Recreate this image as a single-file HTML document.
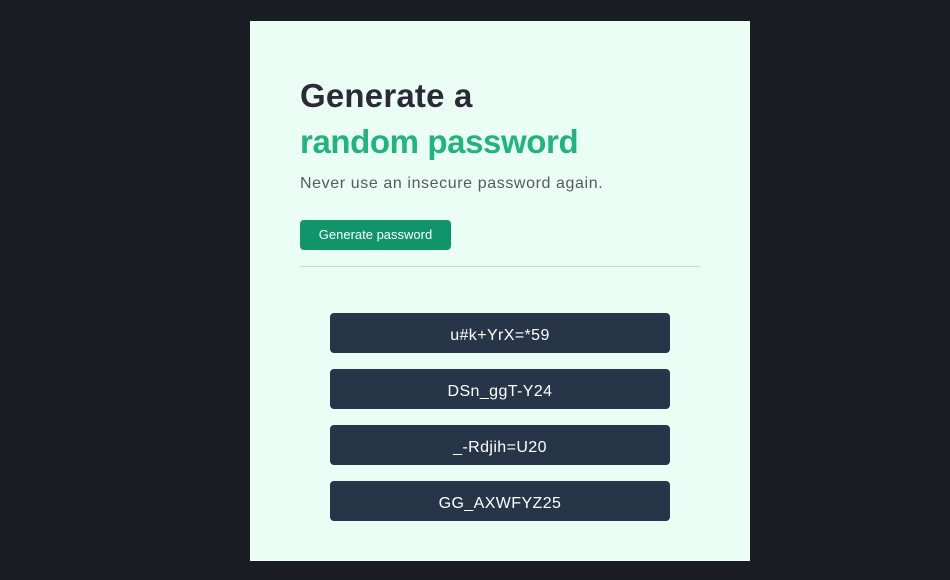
<!DOCTYPE html>
<html><head><style>
body{margin:0;width:950px;height:580px;background:#1a1c23;font-family:"Liberation Sans",sans-serif;position:relative;overflow:hidden}
.card{position:absolute;left:250px;top:21px;width:500px;height:540px;background:#ebfef5}
.h{position:absolute;left:50px;font-weight:bold;font-size:33px;letter-spacing:0.2px;margin:0;white-space:nowrap}
.sub{position:absolute;left:50px;top:154px;font-size:16px;letter-spacing:0.6px;color:#555a60;font-weight:300}
.btn{position:absolute;left:50px;top:199px;width:151px;height:30px;background:#10956a;border-radius:4px;color:#fff;font-size:13px;line-height:30px;text-align:center}
.hr{position:absolute;left:50px;top:245px;width:400px;height:1px;background:#d0d6d3}
.pw{position:absolute;left:80px;width:340px;height:40px;background:#273549;border-radius:4px;color:#fff;font-size:16px;line-height:46px;text-align:center;letter-spacing:0.4px}
</style></head><body>
<div class="card">
<div class="h" style="top:56px;color:#2a2b36">Generate a</div>
<div class="h" style="top:102px;color:#1fb57d;letter-spacing:-0.4px">random password</div>
<div class="sub">Never use an insecure password again.</div>
<div class="btn">Generate password</div>
<div class="hr"></div>
<div class="pw" style="top:292px">u#k+YrX=*59</div>
<div class="pw" style="top:348px">DSn_ggT-Y24</div>
<div class="pw" style="top:404px">_-Rdjih=U20</div>
<div class="pw" style="top:460px">GG_AXWFYZ25</div>
</div>
</body></html>
